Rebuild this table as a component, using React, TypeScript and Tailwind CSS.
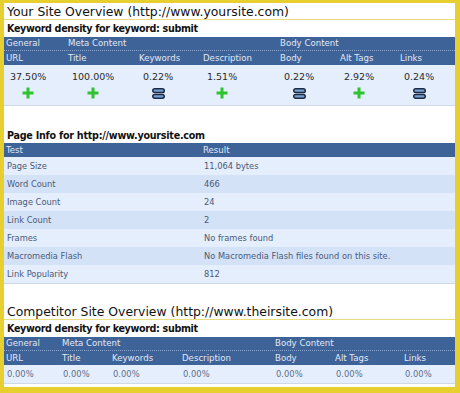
const font = "font-['DejaVu_Sans',sans-serif]";

const overviewCols = 'grid-cols-[62px_71px_64px_77px_60px_60px_1fr]';
const competitorCols = 'grid-cols-[56px_50px_70px_93px_60px_69px_1fr]';

const labels = ['URL', 'Title', 'Keywords', 'Description', 'Body', 'Alt Tags', 'Links'];

type Mark = 'plus' | 'equal';

const overview: { value: string; mark: Mark }[] = [
  { value: '37.50%', mark: 'plus' },
  { value: '100.00%', mark: 'plus' },
  { value: '0.22%', mark: 'equal' },
  { value: '1.51%', mark: 'plus' },
  { value: '0.22%', mark: 'equal' },
  { value: '2.92%', mark: 'plus' },
  { value: '0.24%', mark: 'equal' },
];

const pageInfo = [
  ['Page Size', '11,064 bytes'],
  ['Word Count', '466'],
  ['Image Count', '24'],
  ['Link Count', '2'],
  ['Frames', 'No frames found'],
  ['Macromedia Flash', 'No Macromedia Flash files found on this site.'],
  ['Link Popularity', '812'],
];

function PlusIcon() {
  return (
    <svg width="12" height="12" viewBox="0 0 12 12">
      <rect x="4.5" y="0.5" width="3" height="11" fill="#2fc42f" />
      <rect x="0.5" y="4.5" width="11" height="3" fill="#2fc42f" />
    </svg>
  );
}

function EqualIcon() {
  return (
    <svg width="13" height="11" viewBox="0 0 13 11">
      <rect x="0.75" y="0.75" width="11.5" height="3.8" rx="1.9" fill="#77a0d2" stroke="#1c2a42" strokeWidth="1.5" />
      <rect x="0.75" y="6.45" width="11.5" height="3.8" rx="1.9" fill="#77a0d2" stroke="#1c2a42" strokeWidth="1.5" />
    </svg>
  );
}

function SectionTitle({ name, url }: { name: string; url: string }) {
  return (
    <div className="h-[17px] border-b border-[#e9dc7c] pl-[3px] text-[12.4px] leading-[18px] text-[#111]">
      {name} ({url})
    </div>
  );
}

function SubTitle({ children }: { children: React.ReactNode }) {
  return (
    <div className="h-[17px] pl-[3px] text-[9.6px] font-bold leading-[17px] tracking-[-0.35px] text-[#111]">
      {children}
    </div>
  );
}

function GroupHeader({ cols }: { cols: string }) {
  return (
    <div className="bg-[#3e6399] text-[8.6px] text-[#e2e8f3]">
      <div className={`grid ${cols} h-[14px] items-center border-b border-dotted border-[#8ba4cb]`}>
        <span className="pl-[2px]">General</span>
        <span className="col-span-3 pl-[2px]">Meta Content</span>
        <span className="col-span-3 pl-[2px]">Body Content</span>
      </div>
      <div className={`grid ${cols} h-[14px] items-center`}>
        {labels.map((l) => (
          <span key={l} className="pl-[2px]">
            {l}
          </span>
        ))}
      </div>
    </div>
  );
}

export default function App() {
  return (
    <div
      className={`${font} h-[393px] w-[460px] overflow-hidden border-t-[3px] border-r-[5px] border-b-[6px] border-l-4 border-[#e6cf2e] bg-white`}
    >
      <div className="w-[451px]">
        {/* Your site */}
        <SectionTitle name="Your Site Overview" url="http://www.yoursite.com" />
        <SubTitle>Keyword density for keyword: submit</SubTitle>
        <GroupHeader cols={overviewCols} />
        <div className={`grid ${overviewCols} h-[41px] border-b border-[#cfd8e6] bg-[#e4eefc]`}>
          {overview.map((o, i) => (
            <div key={i} className="pl-[6px] pt-[6px]">
              <div className="flex w-fit flex-col items-center">
                <span className="text-[9.5px] leading-[11px] text-[#2b2b2b]">{o.value}</span>
                <div className="mt-[5px] flex h-[12px] items-center">
                  {o.mark === 'plus' ? <PlusIcon /> : <EqualIcon />}
                </div>
              </div>
            </div>
          ))}
        </div>

        {/* Page info */}
        <div className="mt-[22px] h-[15px] pl-[3px] text-[9.6px] font-bold leading-[16px] tracking-[-0.25px] text-[#111]">
          Page Info for http://www.yoursite.com
        </div>
        <div className="border-b border-[#cfd8e6] text-[8.3px] text-[#4a5a78]">
          <div className="grid h-[14px] grid-cols-[197px_1fr] items-center bg-[#3e6399] text-[8.6px] text-[#e2e8f3]">
            <span className="pl-[2px]">Test</span>
            <span className="pl-[2px]">Result</span>
          </div>
          {pageInfo.map(([test, result], i) => (
            <div
              key={test}
              className={`grid h-[18px] grid-cols-[197px_1fr] items-center ${i % 2 === 0 ? 'bg-[#e4eefd]' : 'bg-[#d4e2f8]'}`}
            >
              <span className="pl-[3px]">{test}</span>
              <span className="pl-[3px]">{result}</span>
            </div>
          ))}
        </div>

        {/* Competitor */}
        <div className="mt-[19px]">
          <SectionTitle name="Competitor Site Overview" url="http://www.theirsite.com" />
        </div>
        <SubTitle>Keyword density for keyword: submit</SubTitle>
        <GroupHeader cols={competitorCols} />
        <div className={`grid ${competitorCols} h-[19px] items-center border-b border-[#cfd8e6] bg-[#e4eefc] text-[8.4px] text-[#5d6e8e]`}>
          {labels.map((l) => (
            <span key={l} className="pl-[3px]">
              0.00%
            </span>
          ))}
        </div>
      </div>
    </div>
  );
}
